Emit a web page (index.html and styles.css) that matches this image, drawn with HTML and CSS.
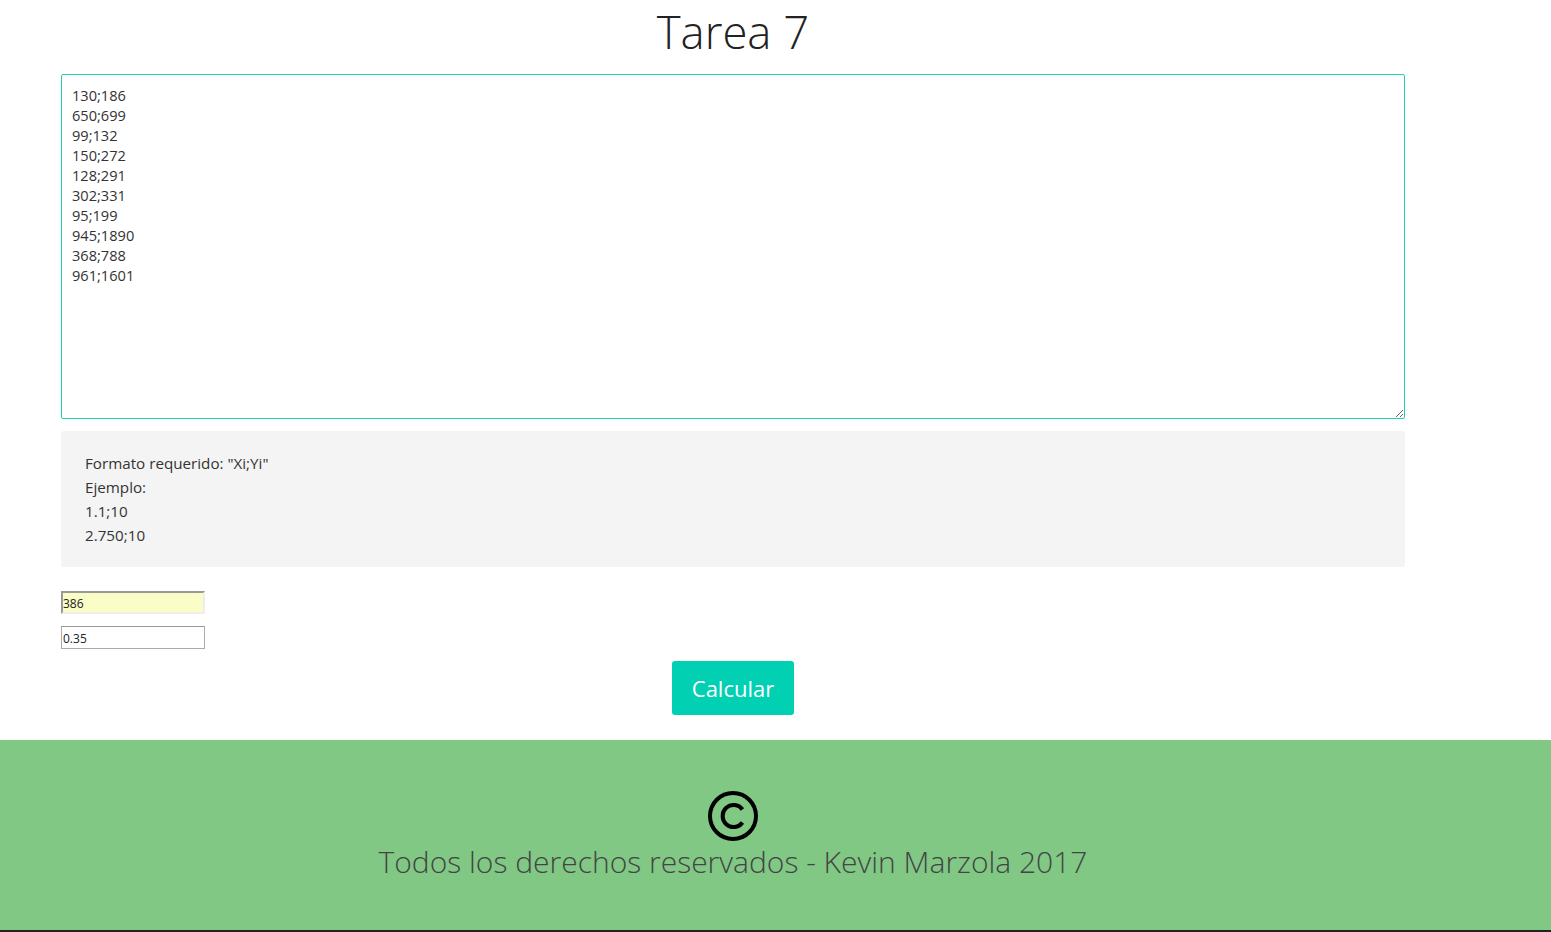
FILE: index.html
```html
<!DOCTYPE html>
<html lang="es">
<head>
<meta charset="utf-8">
<title>Tarea 7</title>
<link rel="stylesheet" href="styles.css">
</head>
<body>
<main class="container">
  <h1 class="title">Tarea 7</h1>
  <textarea class="data" spellcheck="false">130;186
650;699
99;132
150;272
128;291
302;331
95;199
945;1890
368;788
961;1601</textarea>
  <div class="info">
    <p>Formato requerido: "Xi;Yi"</p>
    <p>Ejemplo:</p>
    <p>1.1;10</p>
    <p>2.750;10</p>
  </div>
  <div class="fields">
    <input class="field field-filled" type="text" value="386">
    <input class="field" type="text" value="0.35">
  </div>
  <div class="actions">
    <button class="btn" type="button">Calcular</button>
  </div>
</main>
<footer class="footer">
  <div class="footer-inner">
    <svg class="copy" width="52" height="52" viewBox="0 0 52 52" aria-hidden="true">
      <circle cx="26" cy="26" r="23" fill="none" stroke="#000" stroke-width="4"/>
      <path d="M35.5 19.5 A11 11 0 1 0 35.5 32.5" fill="none" stroke="#000" stroke-width="4"/>
    </svg>
    <p class="rights">Todos los derechos reservados - Kevin Marzola 2017</p>
  </div>
</footer>
</body>
</html>
```

FILE: styles.css
```css
* { box-sizing: border-box; }

html, body {
  margin: 0;
  padding: 0;
  background: #fff;
}

body {
  font-family: "Open Sans", "Noto Sans", "Liberation Sans", sans-serif;
  color: #333;
}

.container {
  width: 1344px;
  margin-left: 61px;
  display: flex;
  flex-direction: column;
}

.title {
  margin: 0;
  height: 74px;
  padding-top: 3px;
  text-align: center;
  font-weight: 300;
  font-size: 45.5px;
  line-height: 56px;
  color: #222;
}

.data {
  display: block;
  width: 1344px;
  height: 345px;
  border: 1px solid #1fd0b4;
  border-radius: 2px;
  padding: 10px 10px;
  font-family: "Open Sans", "Noto Sans", sans-serif;
  font-size: 14.6px;
  line-height: 20px;
  color: #333;
  resize: both;
  outline: none;
}

.info {
  margin-top: 12px;
  height: 136px;
  background: #f4f4f4;
  border-radius: 3px;
  padding: 20px 24px;
  font-size: 15.2px;
  line-height: 24px;
  color: #333;
}

.info p { margin: 0; }

.fields {
  margin-top: 24px;
  display: flex;
  flex-direction: column;
  gap: 12px;
}

.field {
  width: 144px;
  height: 23px;
  padding: 1px 0 0 1px;
  border: 1px solid #aaa;
  border-top-color: #999;
  font-family: "Open Sans", "Noto Sans", sans-serif;
  font-size: 12px;
  color: #222;
  background: #fff;
  outline: none;
}

.field-filled {
  background: #fafdc6;
  border: 2px solid #eee;
  border-top-color: #999;
  border-left-color: #999;
  padding-left: 0;
}

.actions {
  margin-top: 12px;
  display: flex;
  justify-content: center;
}

.btn {
  width: 122px;
  height: 54px;
  background: #02d0b2;
  color: #fff;
  border: none;
  border-radius: 3px;
  font-family: "Open Sans", "Noto Sans", sans-serif;
  font-size: 22px;
  padding: 0;
  cursor: pointer;
}

.footer {
  margin-top: 25px;
  height: 192px;
  background: #80c884;
  border-bottom: 2px solid #222;
}

.footer-inner {
  width: 1344px;
  margin-left: 61px;
  display: flex;
  flex-direction: column;
  align-items: center;
  padding-top: 50px;
}

.copy { display: block; }

.rights {
  margin: 0;
  font-weight: 300;
  font-size: 30px;
  line-height: 40px;
  color: #444;
}
```
